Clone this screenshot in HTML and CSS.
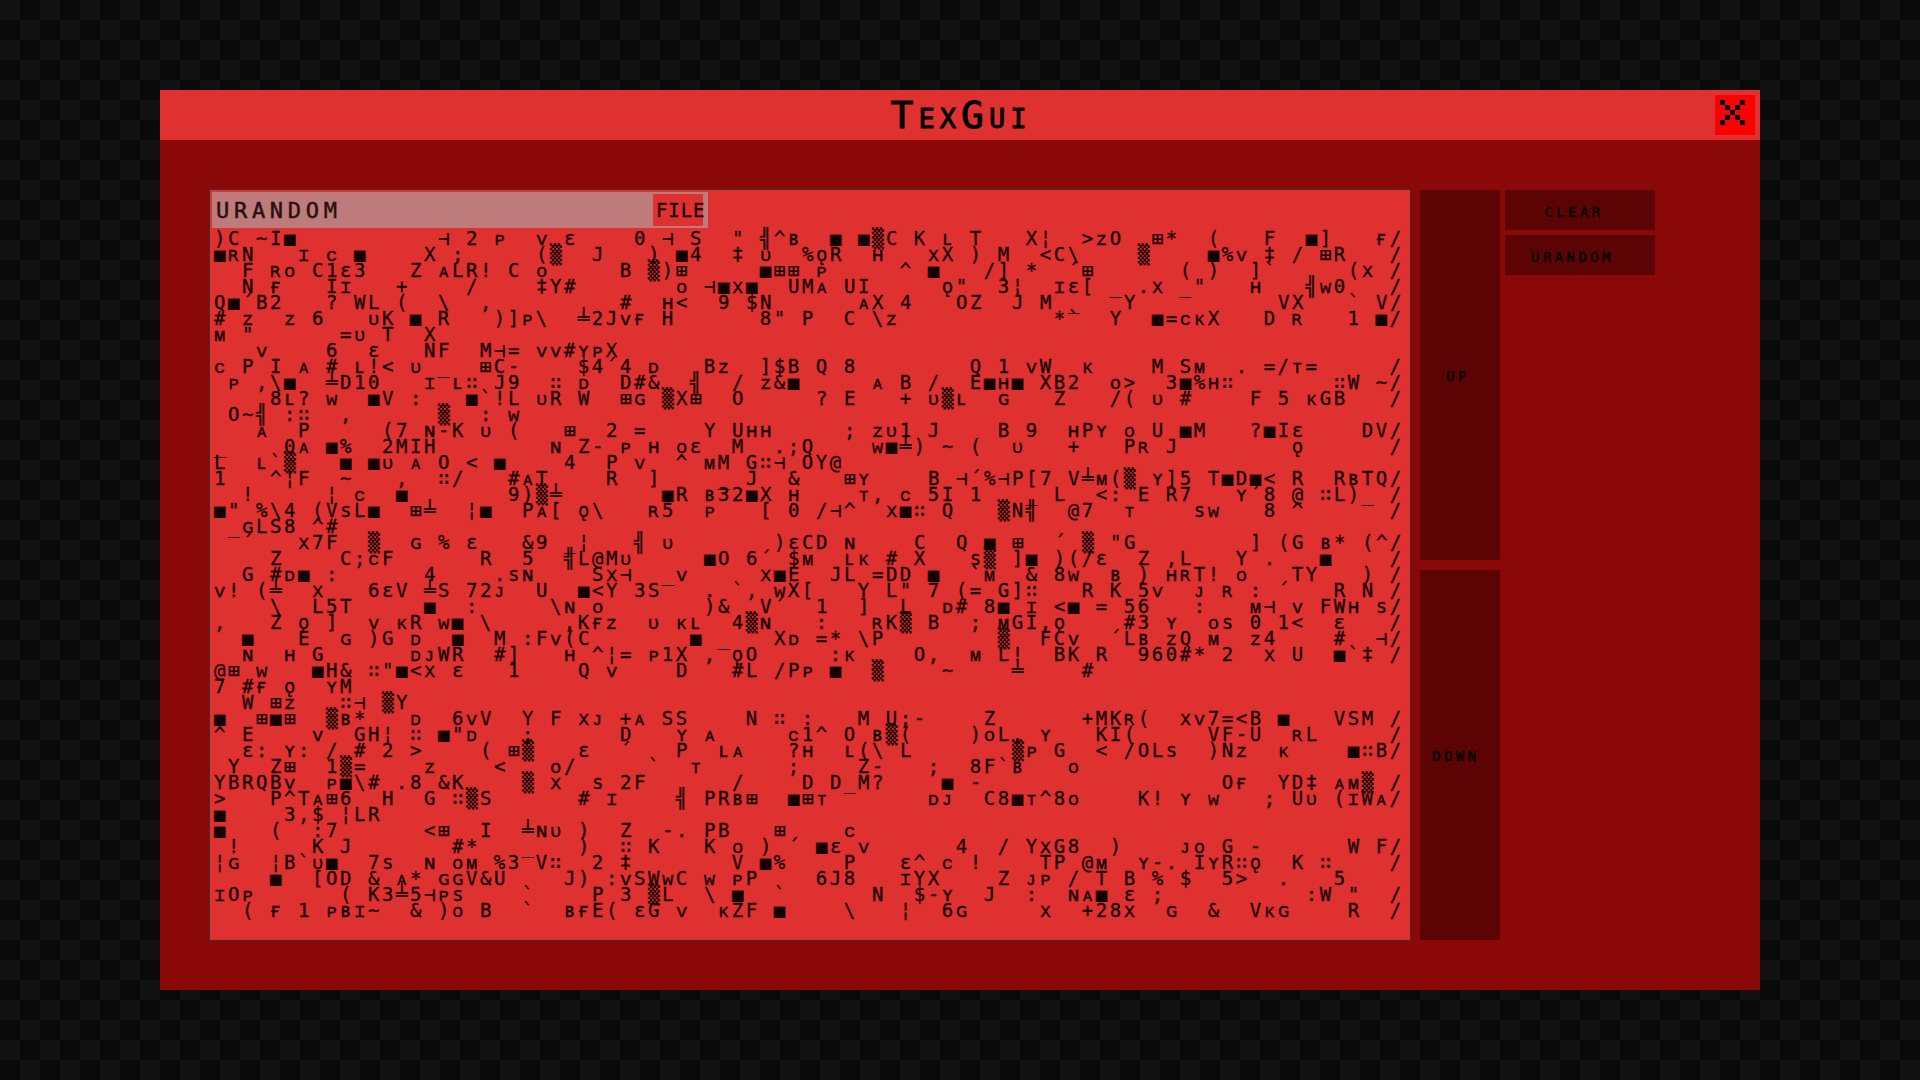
FILE: index.html
```html
<!DOCTYPE html>
<html lang="en">
<head>
<meta charset="UTF-8">
<meta name="viewport" content="width=device-width, initial-scale=1.0">
<title>TexGui</title>
<link rel="stylesheet" href="styles.css">
</head>

<body>
<div class="window">
  <header class="titlebar">
    <h1 class="title">TexGui</h1>
    <button class="close" aria-label="Close">
      <svg width="25" height="25" viewBox="0 0 5 5" shape-rendering="crispEdges">
        <path d="M0 0h1v1H0zM4 0h1v1H4zM1 1h1v1H1zM3 1h1v1H3zM2 2h1v1H2zM1 3h1v1H1zM3 3h1v1H3zM0 4h1v1H0zM4 4h1v1H4z"/>
      </svg>
    </button>
  </header>

  <main class="content">
    <section class="viewer">
      <div class="pathbar">
        <input class="path" type="text" value="URANDOM" readonly>
        <button class="file">FILE</button>
      </div>
<pre class="dump">)C ~I■          ⊣ 2 ᴘ  ᴠ ε    0 ⊣ S  " ╣^ʙ  ■ ■▒C K ʟ T   X¦  &gt;ᴢO  ⊞*  (   F  ■]   ғ/
■ʀN   ɪ ᴄ ■    X ;     (▒  J   ) ■4  ‡ ᴜ  %ǫR  ʜ   xX ) M  &lt;C\    ▒    ■%ᴠ ‡ / ⊞R   /
  F ʀᴏ C1ε3   Z ᴀLR! C ᴏ     B ▒)⊞     ■⊞⊞ ᴘ     ^ ■   /] *  ´⊞      ( )  ]`     (x /
  N ғ   Iɪ   +    /    ‡Y#       ᴏ ⊣■x■  UMᴀ UI     ǫ"  3¦  ɪε[ _ .x _"   ʜ   ╣ᴡ0   /
Q■´B2   ? WL (  \  ,         #  ʜ&lt;  9 $N      ᴀX 4   OZ  J M _   Y          VX   ` V/
# ᴢ  ᴢ 6   ᴜK ■ R   )]ᴘ\  ╧2Jᴠғ H      8" P  C \ᴢ           *`  Y  ■=ᴄᴋX   D ʀ   1 ■/
ᴍ "      =ᴜ T  X
   ᴠ    6  ε   NF  M⊣= ᴠᴠ#ʏᴘX
ᴄ P I ᴀ # ʟ!&lt; ᴜ _  ⊞C-    $4´4 ᴅ   Bᴢ  ]$B Q 8        Q 1 ᴠW  ᴋ    M Sᴍ  . =/ᴛ=     /
 ᴘ ,\■  ╧D10   ɪ ʟ∷ J9  ∷ ᴅ  D#&amp;  ╣  / ᴢ&amp;■     ᴀ B /  E■ʜ■ XB2  ᴏ&gt;  3■%ʜ∷       ∷W ~/
    8ʟ? ᴡ  ■V :   ■`!L ᴜR W  ⊞ɢ ▒X⊞  O     ? E   + ᴜ▒ʟ  ɢ   Z   /( ᴜ #    F 5 ᴋGB   /
 O~╣ :∷  ,      ▒  : ᴡ
   ᴀ  P     (7 ɴ-K ᴜ (   ⊞  2 =    Y Uʜʜ     ; ᴢᴜ1 J    B 9  ʜPʏ ᴏ U ■M   ?■Iε    DV/
_    0ᴀ ■%  2MIH        ɴ Z- ᴘ ʜ ᴏε  M  .;Q    ᴡ■╧) ~ (  ᴜ   +   Pʀ J        ǫ      /
L  ʟ`▒   ■ ■ᴜ ᴀ O &lt; ■    4  P ᴠ  ^ ᴍM G∷⊣ OY@
1   ^¦F  ~   ,  ∷/   #ᴀT    R  ]    _ J  &amp;   ⊞ʏ    B ⊣´%⊣P[7 V╧ᴍ(▒ ʏ]5 T■D■&lt; R  RʙTQ/
  !     ¦ ᴄ  ■       9)▒╧       ■R ʙ32■X ʜ    ᴛ, ᴄ 5I 1   _ L  &lt;: E R7   ʏ´8 @ ∷L)_ /
■" %\4 (VsL■  ⊞╧  ¦■  Pᴀ[ ǫ\   ʀ5  ᴘ   [ 0 /⊣^  x■∷ Q   ▒N╣  @7  ᴛ    sᴡ   8 ^      /
 _ɢLS8 ^#
  ´   x7F  ▒  ɢ % ε   &amp;9 _¦   ╣ ᴜ       )εCD ɴ    C  Q ■ ⊞  ´ ▒ "G        ] (G ʙ* (^/
    Z    C;ᴄF      R  5  ╣L@Mᴜ     ■O 6´ $ᴍ  ʟᴋ # X   s▒ ]■ )(/ε  Z ,L   Y .   ■    /
  G #ᴅ■ :      4    .sɴ    Sx⊣  _ᴠ     x■E  JL =DD ■  `ᴍ  &amp; 8ᴡ  ʙ ) ʜʀT! ᴏ   TY   ) /
ᴠ! (╧  x   6εV ╧S 72ᴊ  U  ■&lt;Y 3S   . `, ᴡX[   Y L" 7 (= G]∷   R K 5ᴠ  ᴊ ʀ : ´   R N /
    \  L5T     ■  :     \ɴ ᴏ       )&amp;  V´  1  ]  L  ᴅ# 8■ ɪ &lt;■ = 56   :   ᴍ⊣ ᴠ FWʜ s/
,   Z ǫ ]  ᴠ ᴋR ᴡ■ \     ,Kғᴢ  ᴜ ᴋʟ  4▒ɴ   :   ʀK▒ B  ; ᴍGI,ǫ    #3 ʏ  ᴏs 0 1&lt;  ε   /
  ■   E  ɢ )G ᴅ  ■  M :Fᴠ(C       ■ _   Xᴅ =* \P        ▒  FCᴠ  ´Lʙ ᴢQ ᴍ  ᴢ4    #  ⊣/
  ɴ  ʜ G      ᴅᴊWR  #]   ʜ ^¦= ᴘ1X , ǫO     :ᴋ    O,  ᴍ L!  BK R  960#* 2  x U  ■`‡ /
@⊞ ᴡ   ■H&amp; ∷"■&lt;x ε   1    Q ᴠ    D   #L /Pᴘ ■  ▒    ~    ╧    #
7 #ғ ǫ  ʏM
  W ⊞ᴢ   ∷⊣ ▒Y
■  ⊞■⊞  ▒ʙ*   ᴅ  6ᴠV  Y F xᴊ +ᴀ SS    N ∷ :   M U;-    Z      +MKʀ(  xᴠ7=&lt;B ■   VSM /
^ E    ᴠ  GH¦ ∷ ■"ᴅ   ;      D   ʏ ᴀ     ᴄ1^ O ʙ▒(    )ᴏL, ʏ   KI(     VF-U  ʀL     /
  ε: ʏ: / # 2 &gt;    ( ⊞▒   ε  ´   P  ʟᴀ   ?ʜ  ʟ(\ L       ▒ᴘ G  &lt; /OLs  )Nᴢ  ᴋ    ■∷B/
 Y  Z⊞  1▒=    ᴢ    &lt;   ᴏ/     `  ᴛ      ;    Z-   ;  8F`ʙ   ᴏ
YBRQBᴠ  ᴘ■\# .8 &amp;K    ▒ x  s 2F      /    D D_M?    ■ -                 Oғ  YD‡ ᴀᴍ▒ /
&gt;   P^Tᴀ⊞6  H  G ∷▒S      # ɪ    ╣ PRʙ⊞  ■⊞ᴛ       ᴅᴊ  C8■ᴛ^8ᴏ    K! ʏ ᴡ   ; Uᴜ (ɪWᴀ/
■    3,$ ¦LR
■   (  :7      &lt;⊞  I  ╧ɴᴜ )  Z  -. PB   ⊞    ᴄ
 !     K J       #*   _   )  ∷ K   K ᴏ ) ´ ■ε ᴠ      4  / YxG8  )    ᴊᴏ G -      W F/
¦ɢ  ¦B`ᴜ■  7s  ɴ ᴏᴍ %3 V∷  2 ‡       V ■%    P   ε^ ᴄ !    TP @ᴍ  ʏ-. IʏR∷ǫ  K ∷    /
    ■  [OD &amp; ᴀ* ɢɢV&amp;U    J) :ᴠSWᴡC ᴡ ᴘP    6J8   ɪYX    Z ᴊᴘ / T B % $  5&gt;  .   5
ɪOᴘ      ( K3╧5⊣ᴘs    `    P 3 ▒L  \ ■  `      N  $-ʏ  J  :  ɴᴀ■ ε ;          :W "  /
  ( ғ 1 ᴘʙɪ~  &amp; )ᴏ B  `  ʙғE( εG ᴠ  ᴋZF ■    \   ¦  6ɢ     x  +28x  ɢ  &amp;  Vᴋɢ    R  /</pre>
    </section>

    <div class="scroll">
      <button class="scroll-btn up">UP</button>
      <button class="scroll-btn down">DOWN</button>
    </div>

    <div class="actions">
      <button class="action clear">CLEAR</button>
      <button class="action urandom">URANDOM</button>
    </div>
  </main>
</div>
</body>
</html>
```

FILE: styles.css
```css
* {
  box-sizing: border-box;
}

body {
  margin: 0;
  height: 100vh;
  display: flex;
  align-items: center;
  justify-content: center;
  background: repeating-conic-gradient(#090909 0 25%, #111111 0 50%) 0 0 / 40px 40px;
  font-family: "DejaVu Sans Mono", "Liberation Mono", monospace;
  color: #000;
}

button {
  font-family: inherit;
  color: inherit;
  border: none;
  padding: 0;
}

.window {
  width: 1600px;
  height: 900px;
  background-color: #8a0808;
  display: flex;
  flex-direction: column;
}

.titlebar {
  position: relative;
  height: 50px;
  flex: none;
  background-color: #e03131;
  display: flex;
  align-items: center;
  justify-content: center;
}

.title {
  margin: 0 0 0 2px;
  font-size: 38px;
  font-weight: normal;
  font-variant: small-caps;
  letter-spacing: 5px;
  line-height: 50px;
  -webkit-text-stroke: 1px #000;
}

.close {
  position: absolute;
  top: 5px;
  right: 5px;
  width: 40px;
  height: 40px;
  padding: 5px;
  background-color: #ff0000;
  display: flex;
  align-items: flex-start;
  justify-content: flex-start;
}

.content {
  flex: 1;
  padding: 49px 0 0 49px;
  display: flex;
  align-items: flex-start;
}

.viewer {
  width: 1202px;
  height: 752px;
  padding: 2px;
  border: 1px solid #333;
  background-color: #e03131;
  overflow: hidden;
}

.pathbar {
  width: 496px;
  height: 36px;
  padding: 2px 5px 2px 0;
  background-color: #bd7b7b;
  display: flex;
}

.path {
  flex: 1;
  min-width: 0;
  padding: 0 0 0 4px;
  border: none;
  outline: none;
  background: transparent;
  font-family: inherit;
  font-size: 22px;
  letter-spacing: 4.7px;
  color: #2a1010;
  -webkit-text-stroke: .5px #2a1010;
}

.file {
  width: 50px;
  flex: none;
  padding: 0 0 0 3px;
  background-color: #e03131;
  font-size: 19px;
  letter-spacing: .9px;
  text-align: left;
  white-space: nowrap;
  -webkit-text-stroke: .3px #150000;
  color: #150000;
}

.dump {
  margin: 2px 0 0;
  padding-left: 2px;
  font-family: inherit;
  font-size: 19px;
  line-height: 16px;
  letter-spacing: 2.56px;
  color: #150000;
  -webkit-text-stroke: .3px #150000;
  white-space: pre;
}

.scroll {
  width: 80px;
  height: 750px;
  margin: 1px 0 0 9px;
  display: flex;
  flex-direction: column;
  gap: 10px;
  flex: none;
}

.scroll-btn {
  flex: 1;
  background-color: #5c0404;
  font-size: 14px;
  letter-spacing: 3.4px;
  -webkit-text-stroke: .4px #000;
}

.up {
  padding: 2px 4px 0 0;
}

.down {
  padding: 2px 8px 0 0;
}

.actions {
  width: 150px;
  margin: 1px 0 0 5px;
  display: flex;
  flex-direction: column;
  gap: 5px;
  flex: none;
}

.action {
  height: 40px;
  padding: 4px 12px 0 0;
  background-color: #5c0404;
  font-size: 14px;
  letter-spacing: 3.4px;
  -webkit-text-stroke: .4px #000;
}

.urandom {
  padding-right: 15px;
}
```
